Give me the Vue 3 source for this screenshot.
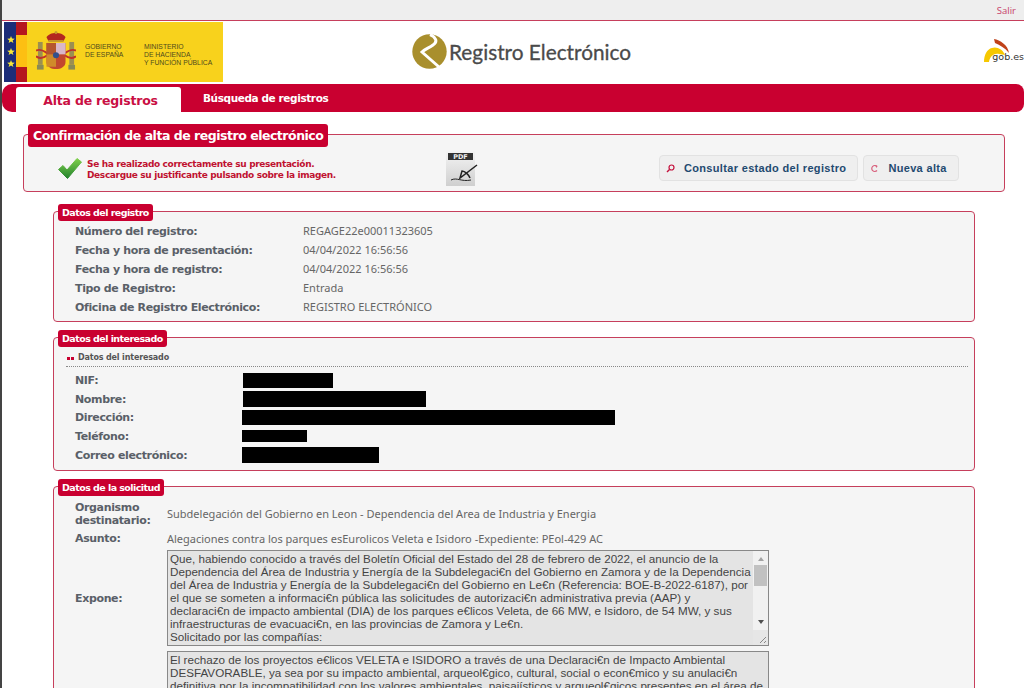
<template>
  <div class="page">
    <div class="topbar"><a class="salir">Salir</a></div>

    <header class="header">
      <div class="gov-logo">
        <svg class="flag" width="23" height="60" viewBox="0 0 23 60">
          <rect width="12" height="60" fill="#1c2d78" />
          <rect x="12" width="11" height="60" fill="#fdbf12" />
          <rect x="12" width="11" height="13" fill="#b5161e" />
          <rect x="12" y="45" width="11" height="15" fill="#b5161e" />
          <g fill="#f7e83a">
            <path d="M7 14l1 2.6 2.8.1-2.2 1.7.8 2.7L7 19.6l-2.4 1.5.8-2.7-2.2-1.7 2.8-.1z" />
            <path d="M7 26l1 2.6 2.8.1-2.2 1.7.8 2.7L7 31.6l-2.4 1.5.8-2.7-2.2-1.7 2.8-.1z" />
            <path d="M7 38l1 2.6 2.8.1-2.2 1.7.8 2.7L7 43.6l-2.4 1.5.8-2.7-2.2-1.7 2.8-.1z" />
          </g>
        </svg>
        <svg class="arms" width="40" height="43" viewBox="0 0 42 44">
          <rect x="2" y="12" width="5" height="24" fill="#9c8f52" />
          <rect x="35" y="12" width="5" height="24" fill="#9c8f52" />
          <path d="M0 21c4-2 8 0 12 3M42 21c-4-2-8 0-12 3M0 27c4 3 8 2 12-1M42 27c-4 3-8 2-12-1" stroke="#c0322a" stroke-width="2" fill="none" />
          <path d="M11 7c3-6 17-6 20 0l-2 4H13z" fill="#b3281f" />
          <circle cx="21" cy="2" r="1.6" fill="#c59a2c" />
          <rect x="13" y="10" width="16" height="2" fill="#c59a2c" />
          <path d="M11 13h20v20c0 10-20 10-20 0z" fill="#c2482e" />
          <rect x="21" y="13" width="10" height="12" fill="#d9b7c8" />
          <rect x="11" y="13" width="10" height="12" fill="#b5562e" />
          <rect x="11" y="25" width="10" height="13" fill="#d08a2a" />
          <circle cx="21" cy="26" r="3.2" fill="#34508c" />
          <rect x="1" y="36" width="7" height="5" fill="#8a8a55" />
          <rect x="34" y="36" width="7" height="5" fill="#8a8a55" />
        </svg>
        <div class="gov-text gov-one">GOBIERNO<br />DE ESPAÑA</div>
        <div class="gov-text gov-two">MINISTERIO<br />DE HACIENDA<br />Y FUNCIÓN PÚBLICA</div>
      </div>

      <div class="brand">
        <svg width="35" height="35" viewBox="0 0 35 35">
          <circle cx="17.5" cy="17.5" r="17.2" fill="#a98f2d" />
          <path d="M18 0.5C24 3 26 8 21 11C17 14 13 15 10 18L27 33" fill="none" stroke="#fff" stroke-width="3" />
        </svg>
        <span>Registro Electrónico</span>
      </div>

      <div class="gob">
        <svg width="26" height="26" viewBox="0 0 26 26">
          <path d="M0 24H5C6 18 10 15 15 16L21 17C19 11 12 8 8 10C3 11 0 17 0 24z" fill="#f6c800" />
          <path d="M10 1C16 2 24 7 25 15C21 10 16 7 11 5z" fill="#c0421a" />
        </svg>
        <span class="gob-text">gob.es</span>
      </div>
    </header>

    <nav class="navbar">
      <a class="tab active">Alta de registros</a>
      <a class="tab">Búsqueda de registros</a>
    </nav>

    <main class="content">
      <section class="box box-main">
        <div class="legend legend-main">Confirmación de alta de registro electrónico</div>
        <div class="confirm">
          <svg class="check" width="24" height="21" viewBox="0 0 24 21">
            <defs>
              <linearGradient id="chk" x1="0" y1="0" x2="0" y2="1">
                <stop offset="0" stop-color="#7fd04b" />
                <stop offset="1" stop-color="#23822e" />
              </linearGradient>
            </defs>
            <path d="M0.5 11.5L5 7.5L9 12L19 0.5L23.5 4L9.500 20.500z" fill="url(#chk)" stroke="url(#chk)" stroke-linejoin="round" />
          </svg>
          <p class="confirm-text">
            Se ha realizado correctamente su presentación.<br />
            Descargue su justificante pulsando sobre la imagen.
          </p>
          <svg class="pdf" width="32" height="35" viewBox="0 0 32 35">
            <defs>
              <linearGradient id="pdfbg" x1="0" y1="0" x2="0" y2="1">
                <stop offset="0" stop-color="#f4f4f4" />
                <stop offset="1" stop-color="#cfcfcf" />
              </linearGradient>
            </defs>
            <rect width="29" height="35" fill="url(#pdfbg)" />
            <rect x="2" y="2" width="25" height="7" fill="#333" />
            <text x="14.500" y="8" text-anchor="middle" class="pdf-label">PDF</text>
            <path d="M5 29c6-3 10 2 20 0" fill="none" stroke="#222" />
            <path d="M31 14L14 27l2-7c3 0 7 4 8 7" fill="none" stroke="#222" stroke-width="1.500" />
          </svg>
          <div class="actions">
            <a class="btn">
              <svg width="9" height="9" viewBox="0 0 9 9"><circle cx="5.500" cy="3.500" r="2.500" fill="none" stroke="#c4103c" stroke-width="1.200" /><path d="M3.500 5.500L1 8" stroke="#c4103c" stroke-width="1.500" /></svg>
              Consultar estado del registro
            </a>
            <a class="btn">
              <svg width="9" height="9" viewBox="0 0 9 9"><path d="M7 2.500A3 3 0 1 0 7 6.500" fill="none" stroke="#d8607c" stroke-width="1.200" /><path d="M5 1l2.500 1-1 2z" fill="#d8607c" /></svg>
              Nueva alta
            </a>
          </div>
        </div>
      </section>

      <section class="box box-reg">
        <div class="legend">Datos del registro</div>
        <div class="reg-rows">
          <div v-for="row in registro" :key="row[0]" class="reg-row">
            <span class="label">{{ row[0] }}</span>
            <span class="value">{{ row[1] }}</span>
          </div>
        </div>
      </section>

      <section class="box box-int">
        <div class="legend">Datos del interesado</div>
        <div class="sub-head"><i></i><i></i><span>Datos del interesado</span></div>
        <div class="int-rows">
          <div v-for="row in interesado" :key="row.label" class="int-row">
            <span class="label">{{ row.label }}</span>
            <span class="redact" :style="{ width: row.w + 'px', height: row.h + 'px', marginLeft: row.x + 'px' }"></span>
          </div>
        </div>
      </section>

      <section class="box box-sol">
        <div class="legend">Datos de la solicitud</div>
        <div class="sol-grid">
          <span class="label">Organismo destinatario:</span>
          <span class="value">Subdelegación del Gobierno en Leon - Dependencia del Area de Industria y Energia</span>
          <span class="label">Asunto:</span>
          <span class="value">Alegaciones contra los parques esEurolicos Veleta e Isidoro -Expediente: PEol-429 AC</span>
          <span class="label">Expone:</span>
          <div class="area-wrap">
            <textarea class="area" readonly :value="expone"></textarea>
            
            <div class="fake-scroll">
              <span class="arrow arrow-up"></span>
              <span class="thumb"></span>
              <span class="arrow arrow-down"></span>
              <svg class="grip" width="15" height="15" viewBox="0 0 15 15">
                <path d="M13 7L7 13M13 11L11 13" stroke="#888" />
              </svg>
            </div>
          </div>
          <span class="label"></span>
          <textarea class="area area-clip" readonly :value="solicita"></textarea>
        </div>
      </section>
    </main>
  </div>
</template>

<script setup>
const registro = [
  ['Número del registro:', 'REGAGE22e00011323605'],
  ['Fecha y hora de presentación:', '04/04/2022 16:56:56'],
  ['Fecha y hora de registro:', '04/04/2022 16:56:56'],
  ['Tipo de Registro:', 'Entrada'],
  ['Oficina de Registro Electrónico:', 'REGISTRO ELECTRÓNICO'],
]

// tachados del original
const interesado = [
  { label: 'NIF:', w: 90, h: 15, x: 1 },
  { label: 'Nombre:', w: 183, h: 16, x: 1 },
  { label: 'Dirección:', w: 373, h: 15, x: 0 },
  { label: 'Teléfono:', w: 65, h: 12, x: 0 },
  { label: 'Correo electrónico:', w: 137, h: 16, x: 0 },
]

const expone =
  'Que, habiendo conocido a través del Boletín Oficial del Estado del 28 de febrero de 2022, el anuncio de la Dependencia del Área de Industria y Energía de la Subdelegaci€n del Gobierno en Zamora y de la Dependencia del Área de Industria y Energía de la Subdelegaci€n del Gobierno en Le€n (Referencia: BOE-B-2022-6187), por el que se someten a informaci€n pública las solicitudes de autorizaci€n administrativa previa (AAP) y declaraci€n de impacto ambiental (DIA) de los parques e€licos Veleta, de 66 MW, e Isidoro, de 54 MW, y sus infraestructuras de evacuaci€n, en las provincias de Zamora y Le€n.\nSolicitado por las compañías:'

const solicita =
  'El rechazo de los proyectos e€licos VELETA e ISIDORO a través de una Declaraci€n de Impacto Ambiental DESFAVORABLE, ya sea por su impacto ambiental, arqueol€gico, cultural, social o econ€mico y su anulaci€n definitiva por la incompatibilidad con los valores ambientales, paisajísticos y arqueol€gicos presentes en el área de'
</script>

<style>
html, body {
  margin: 0;
  height: 100%;
  overflow: hidden;
  background: #fff;
}
</style>

<style scoped>
.page {
  height: 688px;
  overflow: hidden;
  border-left: 2px solid #444;
  font-family: "DejaVu Sans", sans-serif;
}

/* ===== cabecera ===== */
.topbar {
  height: 20px;
  background: #eee;
  border-bottom: 1px solid #c63f5c;
  display: flex;
  justify-content: flex-end;
  align-items: center;
  padding-right: 8px;
}
.salir {
  color: #c8406a;
  font: 9.5px "Open Sans", sans-serif;
}
.header {
  height: 62px;
  display: flex;
  align-items: flex-start;
}
.gov-logo {
  width: 219px;
  height: 60px;
  margin: 1px 0 0 2px;
  background: #f8d21c;
  display: flex;
  flex-shrink: 0;
}
.arms {
  margin: 8px 0 0 9px;
  flex-shrink: 0;
}
.gov-text {
  font: 6.8px/8px "Liberation Sans", sans-serif;
  color: #4f4a1c;
  white-space: nowrap;
}
.gov-one {
  margin: 21px 0 0 9px;
  width: 59px;
}
.gov-two {
  margin-top: 21px;
}
.brand {
  margin: 13px 0 0 189px;
  display: flex;
  align-items: center;
  gap: 2px;
  font: 20.8px "Lato", sans-serif;
  -webkit-text-stroke: 0.3px #4a4a4a;
  color: #4a4a4a;
  white-space: nowrap;
}
.gob {
  position: relative;
  margin: 17px 0 0 auto;
  width: 40px;
  height: 30px;
}
.gob-text {
  position: absolute;
  right: 0;
  top: 13px;
  font: 9.5px "DejaVu Sans", sans-serif;
  color: #333;
}

/* ===== pestañas ===== */
.navbar {
  margin-top: 1px;
  height: 25px;
  padding: 3px 0 0 14px;
  background: #c90030;
  border-radius: 10px 8px 8px 10px;
  display: flex;
}
.tab {
  color: #fff;
  font: bold 10.5px "DejaVu Sans", sans-serif;
  letter-spacing: -0.4px;
  margin: 0 0 0 22px;
  line-height: 23px;
}
.tab.active {
  box-sizing: border-box;
  width: 165px;
  margin: 0;
  padding-left: 4px;
  background: #fff;
  border-radius: 3px 3px 0 0;
  color: #c90f44;
  text-align: center;
  font-size: 12.5px;
  letter-spacing: -0.2px;
  line-height: 27px;
}

/* ===== bloques ===== */
.content {
  padding-left: 51px;
  padding-right: 49px;
}
.box {
  position: relative;
  box-sizing: border-box;
  background: #f5f5f5;
  border: 1px solid #c63f5c;
  border-radius: 4px;
}
.box-main {
  margin: 22px -30px 0 -30px;
  height: 58px;
}
.box-reg {
  margin-top: 19px;
  height: 111px;
}
.box-int {
  margin-top: 15px;
  height: 134px;
}
.box-sol {
  margin-top: 15px;
  height: 260px;
}
.legend {
  position: absolute;
  left: 4px;
  top: -8px;
  background: #c90030;
  color: #fff;
  font: bold 9.5px/17px "DejaVu Sans", sans-serif;
  letter-spacing: -0.55px;
  padding: 0 4px;
  border-radius: 3px;
  white-space: nowrap;
}
.legend-main {
  top: -11px;
  font-size: 12.5px;
  letter-spacing: -0.48px;
  line-height: 23px;
  padding: 0 5px;
}
.label {
  color: #5a6068;
  font: bold 11px/13px "DejaVu Sans", sans-serif;
  letter-spacing: -0.35px;
}
.value {
  color: #666;
  font: 11px "Noto Sans", sans-serif;
}

/* ===== confirmación ===== */
.confirm {
  display: flex;
  align-items: flex-start;
  padding-top: 16px;
}
.check {
  margin: 7px 5px 0 34px;
  flex-shrink: 0;
}
.confirm-text {
  width: 359px;
  margin: 8px 0 0 0;
  color: #c01230;
  font: bold 9px/11px "DejaVu Sans", sans-serif;
  letter-spacing: -0.35px;
  white-space: nowrap;
  flex-shrink: 0;
}
.pdf {
  flex-shrink: 0;
}
.pdf-label {
  font: bold 6.5px "DejaVu Sans", sans-serif;
  fill: #eee;
}
.actions {
  display: flex;
  gap: 5px;
  margin: 4px 0 0 181px;
}
.btn {
  height: 26px;
  box-sizing: border-box;
  padding: 0 11px 0 6px;
  display: flex;
  align-items: center;
  gap: 9px;
  background: #efefef;
  border: 1px solid #e2e2e2;
  border-radius: 4px;
  color: #1f4a70;
  font: bold 11px "Liberation Sans", sans-serif;
  letter-spacing: 0.33px;
  white-space: nowrap;
}

/* ===== registro ===== */
.reg-rows {
  padding: 9px 0 0 21px;
}
.reg-row {
  display: grid;
  grid-template-columns: 228px 1fr;
  height: 19px;
  align-items: center;
}
.reg-row .label {
  padding-top: 2px;
}

/* ===== interesado ===== */
.sub-head {
  margin: 15px 6px 0 12px;
  padding: 0 0 3px 1px;
  border-bottom: 1px dotted #888;
  color: #555;
  font: bold 8px/10px "DejaVu Sans", sans-serif;
  letter-spacing: -0.15px;
  display: flex;
  align-items: center;
}
.sub-head i {
  width: 3px;
  height: 3px;
  margin-right: 1px;
  background: #c90030;
}
.sub-head span {
  margin-left: 3px;
}
.int-rows {
  padding: 4px 0 0 21px;
}
.int-row {
  display: grid;
  grid-template-columns: 167px 1fr;
  height: 18.700px;
  align-items: center;
}
.redact {
  display: block;
  background: #000;
}

/* ===== solicitud ===== */
.sol-grid {
  display: grid;
  grid-template-columns: 92px 602px;
  grid-template-rows: 27px 23px 96px auto;
  align-items: center;
  padding: 13px 0 0 21px;
}
.area-wrap {
  position: relative;
  height: 96px;
}
.area {
  box-sizing: border-box;
  display: block;
  width: 602px;
  height: 96px;
  margin: 0;
  padding: 1px 15px 1px 2px;
  background: #e4e4e4;
  border: 1px solid #888;
  color: #444;
  font: 11.67px/13px "Liberation Sans", sans-serif;
  overflow: hidden;
  resize: none;
  outline: none;
}
.area-clip {
  margin-top: 5px;
  padding-right: 2px;
}
.fake-scroll {
  position: absolute;
  top: 1px;
  right: 1px;
  bottom: 1px;
  width: 15px;
  background: #f1f1f1;
  display: flex;
  flex-direction: column;
  align-items: center;
}
.arrow {
  width: 0;
  height: 0;
  border-left: 3.5px solid transparent;
  border-right: 3.5px solid transparent;
}
.arrow-up {
  margin-top: 6px;
  border-bottom: 4px solid #a3a3a3;
}
.thumb {
  width: 13px;
  height: 21px;
  margin-top: 4px;
  background: #c1c1c1;
}
.arrow-down {
  margin-top: 34px;
  border-top: 4px solid #505050;
}
.grip {
  margin-top: auto;
  background: #e6e6e6;
}
</style>
